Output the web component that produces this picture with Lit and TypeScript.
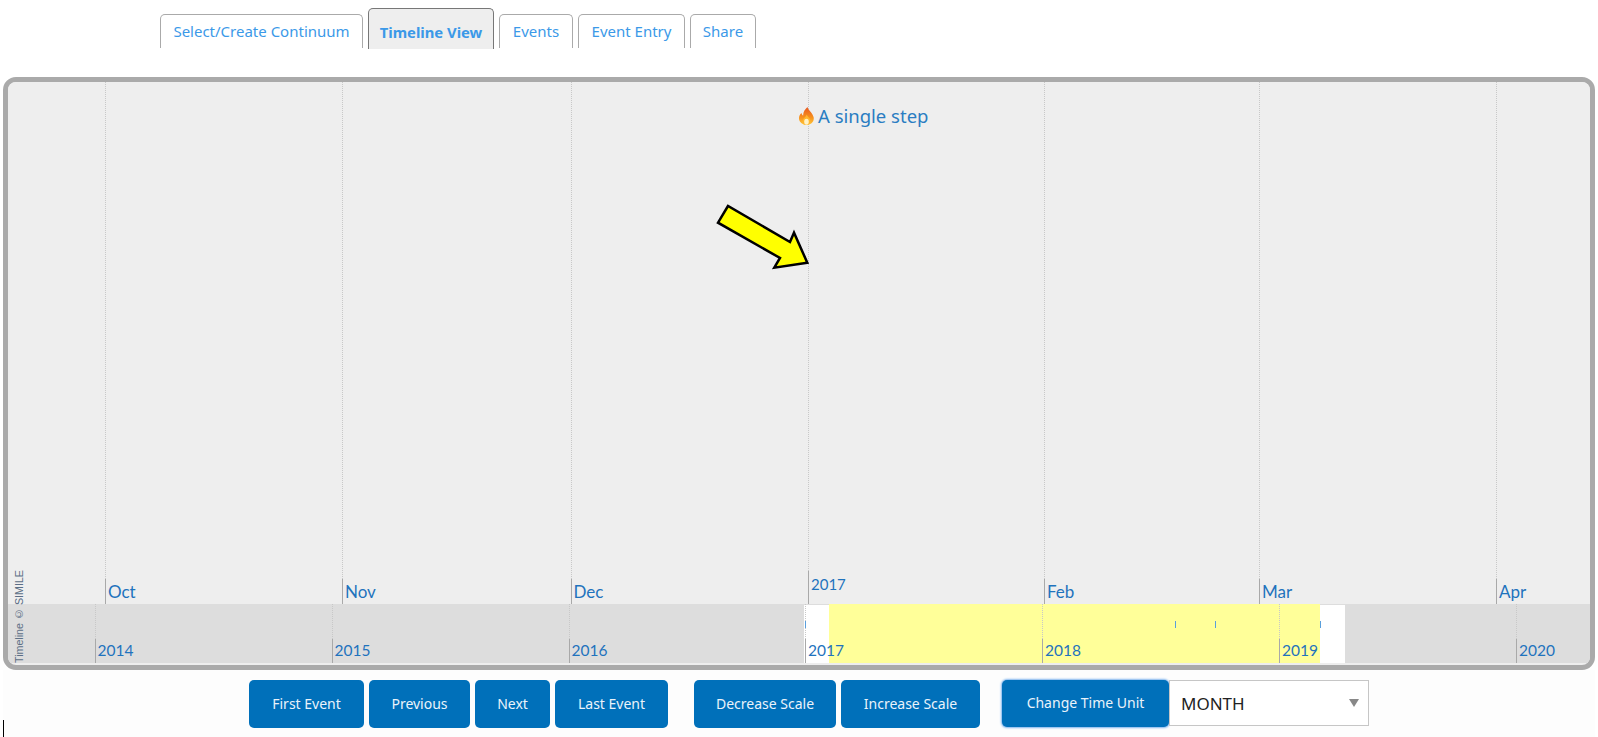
import { LitElement, html, css, svg } from "lit";
import { customElement } from "lit/decorators.js";

const mainLines = [
  { x: 97, y: "Oct" }, { x: 334, y: "Nov" }, { x: 562.500, y: "Dec" }, { x: 800, y: "2017", major: true },
  { x: 1036, y: "Feb" }, { x: 1251, y: "Mar" }, { x: 1488, y: "Apr" },
];
const overLines = [
  { x: 86.500, y: "2014" }, { x: 323.500, y: "2015" }, { x: 560.500, y: "2016" }, { x: 797, y: "2017" },
  { x: 1034, y: "2018" }, { x: 1271, y: "2019" }, { x: 1508, y: "2020" },
];
const ticks = [797, 1167, 1207, 1312];
const tabs = [
  { t: "Select/Create Continuum", w: 203 }, { t: "Timeline View", w: 126, on: true }, { t: "Events", w: 74 },
  { t: "Event Entry", w: 107 }, { t: "Share", w: 66 },
];

@customElement("app-root")
export class AppRoot extends LitElement {
  static styles = css`
    :host { display: block; width: 1598px; height: 737px; background: #fff; overflow: hidden; position: relative; font-family: "Noto Sans", sans-serif; }
    .tabs { display: flex; align-items: flex-end; height: 49px; padding-left: 160px; gap: 5px; box-sizing: border-box; }
    .tab { box-sizing: border-box; height: 34px; margin-bottom: 1px; border: 1.500px solid #aaa; border-bottom: none; border-radius: 5px 5px 0 0; background: #fff; color: #3b99e8; font-size: 15px; display: flex; align-items: center; justify-content: center; padding-bottom: 2px; }
    .tab.on { height: 41px; margin-bottom: 0; background: #eee; font-weight: 700; border: 1.500px solid #777; border-bottom: none; padding-bottom: 0; padding-top: 6px; font-size: 14.800px; }
    .panel { position: relative; box-sizing: border-box; margin: 28px 3px 0; width: 1592px; height: 593px; border: 5.500px solid #aaa; border-radius: 13px; overflow: hidden; background: #eee; display: flex; flex-direction: column; }
    .band { position: relative; }
    .main { height: 522px; background: #eee; }
    .over { height: 59px; background: #ddd; }
    .dot { position: absolute; top: 0; width: 0; border-left: 1px dotted #c8c8c8; }
    .solid { position: absolute; bottom: 0; width: 1px; background: #a9a9a9; }
    .lab { position: absolute; font-family: "Lato", sans-serif; color: #1f73bd; font-size: 17px; line-height: 18px; white-space: nowrap; }
    .main .lab { bottom: 3px; }
    .main .lab.major { bottom: 11px; font-size: 15px; }
    .over .lab { bottom: 4px; font-size: 15.500px; }
    .white { position: absolute; top: 1px; bottom: 0; left: 796px; width: 541px; background: #fff; }
    .yellow { position: absolute; top: 0; bottom: 0; left: 821px; width: 491px; background: #ff9; }
    .tick { position: absolute; top: 17px; height: 7px; width: 1px; background: #5a9fdc; }
    .event { position: absolute; left: 790.500px; top: 22px; display: flex; align-items: center; gap: 4.500px; color: #2a7dc2; font-size: 18.500px; line-height: 24px; white-space: nowrap; }
    .copy { position: absolute; left: 5px; bottom: 2.500px; writing-mode: vertical-rl; transform: rotate(180deg); font-family: "Liberation Sans", sans-serif; font-size: 10.700px; line-height: 12px; color: #5c6f86; }
    .arrow { position: absolute; left: 701.500px; top: 112.500px; }
    .controls { height: 67px; background: #fdfdfd; margin: 0 3px; padding: 10px 0 0 246px; box-sizing: border-box; display: flex; align-items: flex-start; }
    .btn { box-sizing: border-box; height: 48px; border: none; border-radius: 5px; background: #0070ba; color: #eaf3fa; font-family: "Noto Sans", sans-serif; font-size: 14px; margin-right: 5px; padding: 0 0 2px; }
    .btn.last { margin-right: 26px; }
    .btn.gap { margin-right: 22px; }
    .btn.focus { height: 47px; margin: 0; box-shadow: 0 0 2px 1px #7fb4ee; }
    .select { box-sizing: border-box; width: 200px; height: 46px; border: 1px solid #c6c6c6; background: #fff; display: flex; align-items: center; justify-content: space-between; padding: 0 9px 0 11px; font-size: 17px; color: #222; }
    .caret { width: 0; height: 0; border-left: 5px solid transparent; border-right: 5px solid transparent; border-top: 8px solid #888; }
    .cursor { position: absolute; left: 3px; top: 720px; width: 1px; height: 17px; background: #000; }
  `;

  line(x: number, h: number) {
    return html`<div class="dot" style="left:${x}px;height:${h}px"></div>`;
  }

  render() {
    const w = (n: number) => `width:${n}px`;
    return html`
      <div class="tabs">
        ${tabs.map((t) => html`<div class="tab ${t.on ? "on" : ""}" style=${w(t.w)}>${t.t}</div>`)}
      </div>
      <div class="panel">
        <div class="band main">
          ${mainLines.map((l) => {
            const s = l.major ? 33 : 25;
            return html`${this.line(l.x, 522 - s)}
              <div class="solid" style="left:${l.x}px;height:${s}px"></div>
              <div class="lab ${l.major ? "major" : ""}" style="left:${l.x + 3}px">${l.y}</div>`;
          })}
          <div class="event">
            <svg width="15" height="18" viewBox="0 0 15 18">
              <defs>
                <linearGradient id="fl" x1="0" y1="0" x2="0" y2="1">
                  <stop offset="0" stop-color="#e8561f" />
                  <stop offset="0.600" stop-color="#f7941e" />
                  <stop offset="1" stop-color="#ffc83d" />
                </linearGradient>
              </defs>
              <path d="M8.500 0C9 3 14 6 14.700 10.500 15.300 15 11.500 18 7.500 18S0 15.200 0 11.300C0 9 1 7.200 2.500 6c.2 1.200.7 2.100 1.700 2.600C3.900 5.500 6 2 8.500 0z" fill="url(#fl)" />
              <path d="M7.800 7.500c.4 2 3.700 3.500 3.700 6.500 0 2.300-1.800 4-4 4s-4-1.700-4-3.800c0-2.500 3.200-3.800 4.300-6.700z" fill="#ffb52e" />
              <ellipse cx="7.500" cy="14.800" rx="2.300" ry="3" fill="#fff3c8" />
            </svg>
            <span>A single step</span>
          </div>
          <svg class="arrow" width="110" height="85" viewBox="710 195 110 85">
            ${svg`<polygon points="728,206 718,222.700 780,258 774.300,267.700 807.300,262.700 794,232.700 790,242" fill="#ff0" stroke="#000" stroke-width="2.500" />`}
          </svg>
        </div>
        <div class="band over">
          <div class="white"></div>
          <div class="yellow"></div>
          ${overLines.map(
            (l) => html`${this.line(l.x, 35)}
              <div class="solid" style="left:${l.x}px;height:24px"></div>
              <div class="lab" style="left:${l.x + 3}px">${l.y}</div>`
          )}
          ${ticks.map((x) => html`<div class="tick" style="left:${x}px"></div>`)}
        </div>
        <div class="copy">Timeline © SIMILE</div>
      </div>
      <div class="controls">
        <button class="btn" style=${w(115)}>First Event</button>
        <button class="btn" style=${w(101)}>Previous</button>
        <button class="btn" style=${w(75)}>Next</button>
        <button class="btn last" style=${w(113)}>Last Event</button>
        <button class="btn" style=${w(142)}>Decrease Scale</button>
        <button class="btn gap" style=${w(139)}>Increase Scale</button>
        <button class="btn focus" style=${w(167)}>Change Time Unit</button>
        <div class="select"><span>MONTH</span><span class="caret"></span></div>
      </div>
      <div class="cursor"></div>
    `;
  }
}
